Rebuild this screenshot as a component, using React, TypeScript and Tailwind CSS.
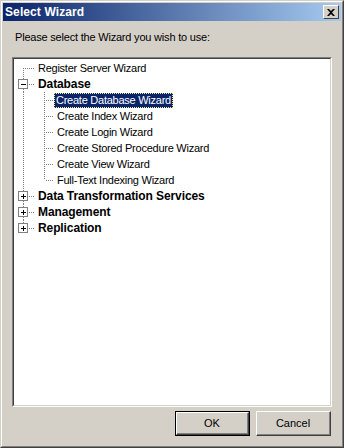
import React from "react";

type Node = { label: string; bold?: boolean; level: 0 | 1; box?: "minus" | "plus"; selected?: boolean; last?: boolean };

const nodes: Node[] = [
  { label: "Register Server Wizard", level: 0 },
  { label: "Database", bold: true, level: 0, box: "minus" },
  { label: "Create Database Wizard", level: 1, selected: true },
  { label: "Create Index Wizard", level: 1 },
  { label: "Create Login Wizard", level: 1 },
  { label: "Create Stored Procedure Wizard", level: 1 },
  { label: "Create View Wizard", level: 1 },
  { label: "Full-Text Indexing Wizard", level: 1, last: true },
  { label: "Data Transformation Services", bold: true, level: 0, box: "plus" },
  { label: "Management", bold: true, level: 0, box: "plus" },
  { label: "Replication", bold: true, level: 0, box: "plus", last: true },
];

const DOT = "#808080";

function VLine({ x, y1, y2 }: { x: number; y1: number; y2: number }) {
  const pts = [];
  for (let y = y1; y < y2; y += 2) pts.push(<rect key={y} x={x} y={y} width={1} height={1} fill={DOT} />);
  return <>{pts}</>;
}
function HLine({ y, x1, x2 }: { y: number; x1: number; x2: number }) {
  const pts = [];
  for (let x = x1; x < x2; x += 2) pts.push(<rect key={x} x={x} y={y} width={1} height={1} fill={DOT} />);
  return <>{pts}</>;
}

function Gutter({ node, idx }: { node: Node; idx: number }) {
  const c0 = 8;
  const isFirst = idx === 0;
  const cells: React.ReactNode[] = [];
  {
    let content: React.ReactNode;
    if (node.level === 0) {
      content = (
        <>
          {!isFirst && <VLine x={c0} y1={0} y2={node.box ? 4 : 8} />}
          {!node.last && <VLine x={c0} y1={node.box ? 13 : 8} y2={16} />}
          {node.box ? (
            <>
              <rect x={c0 - 4.5} y={3.5} width={9} height={9} fill="white" stroke={DOT} />
              <rect x={c0 - 2} y={8} width={5} height={1} fill="black" />
              {node.box === "plus" && <rect x={c0} y={6} width={1} height={5} fill="black" />}
              <HLine y={8} x1={c0 + 6} x2={20} />
            </>
          ) : (
            <HLine y={8} x1={c0 + 2} x2={20} />
          )}
        </>
      );
    } else {
      content = <VLine x={c0} y1={0} y2={16} />;
    }
    cells.push(
      <svg key="c0" width={21} height={16} className="shrink-0 block">
        {content}
      </svg>
    );
  }
  if (node.level === 1) {
    const c1 = 8;
    cells.push(
      <svg key="c1" width={19} height={16} className="shrink-0 block">
        <VLine x={c1} y1={0} y2={node.last ? 8 : 16} />
        <HLine y={8} x1={c1 + 2} x2={18} />
      </svg>
    );
  }
  return <>{cells}</>;
}

export default function App() {
  return (
    <div
      className="w-[344px] h-[448px] bg-[#d4d0c8] flex flex-col border-t border-l border-t-[#d4d0c8] border-l-[#d4d0c8] border-r border-b border-r-[#404040] border-b-[#404040]"
      style={{ fontFamily: '"Liberation Sans", Arial, sans-serif' }}
    >
      <div className="flex flex-col flex-1 border-t border-l border-t-white border-l-white border-r border-b border-r-[#808080] border-b-[#808080] p-px">
        {/* Title bar */}
        <div className="h-[18px] flex items-center justify-between pl-[2px] pr-[2px] bg-[linear-gradient(to_right,#0a246a,#a6caf0)]">
          <span className="text-white font-bold text-[12px] leading-none tracking-[0.1px]">Select Wizard</span>
          <div className="w-[16px] h-[14px] bg-[#d4d0c8] border-t border-l border-t-white border-l-white border-r border-b border-r-[#404040] border-b-[#404040] flex items-center justify-center">
            <svg width="8" height="7" viewBox="0 0 8 7">
              <path d="M0 0h2l2 2 2-2h2L5 3.5 8 7H6L4 5 2 7H0l3-3.5z" fill="black" />
            </svg>
          </div>
        </div>

        {/* Body */}
        <div className="flex flex-col flex-1 px-[9px] pt-[9px]">
          <div className="text-[11px] leading-[14px] text-black pl-[3px] tracking-[-0.2px]">Please select the Wizard you wish to use:</div>
          <div className="mt-[13px] h-[350px] bg-white border-t border-l border-t-[#808080] border-l-[#808080] border-r border-b border-r-white border-b-white">
            <div className="h-full border-t border-l border-t-[#404040] border-l-[#404040] border-r border-b border-r-[#d4d0c8] border-b-[#d4d0c8] pl-[1px] pt-[1px]">
              {nodes.map((n, i) => (
                <div key={i} className="flex items-center h-[16px]">
                  <Gutter node={n} idx={i} />
                  {n.selected ? (
                    <span className="h-[15px] px-[2px] flex items-center bg-[#0a246a] text-white text-[11px] tracking-[-0.25px] outline-dotted outline-1 outline-[#f0e68c] -outline-offset-1 ml-[-1px]">
                      {n.label}
                    </span>
                  ) : (
                    <span
                      className={
                        "h-[16px] px-[2px] flex items-center text-black " +
                        (n.bold ? "font-bold text-[12px] tracking-[-0.1px]" : "text-[11px] tracking-[-0.25px]")
                      }
                    >
                      {n.label}
                    </span>
                  )}
                </div>
              ))}
            </div>
          </div>
          <div className="flex justify-end gap-[6px] mt-[4px] pr-[1px]">
            <div className="w-[75px] h-[25px] border border-black">
              <div className="w-full h-full border-t border-l border-t-white border-l-white border-r border-b border-r-[#404040] border-b-[#404040] flex items-center justify-center text-[11px] text-black">
                <div className="w-full h-full border-r border-b border-r-[#808080] border-b-[#808080] flex items-center justify-center">OK</div>
              </div>
            </div>
            <div className="w-[75px] h-[25px] border-t border-l border-t-white border-l-white border-r border-b border-r-[#404040] border-b-[#404040]">
              <div className="w-full h-full border-r border-b border-r-[#808080] border-b-[#808080] flex items-center justify-center text-[11px] text-black">Cancel</div>
            </div>
          </div>
        </div>
      </div>
    </div>
  );
}
